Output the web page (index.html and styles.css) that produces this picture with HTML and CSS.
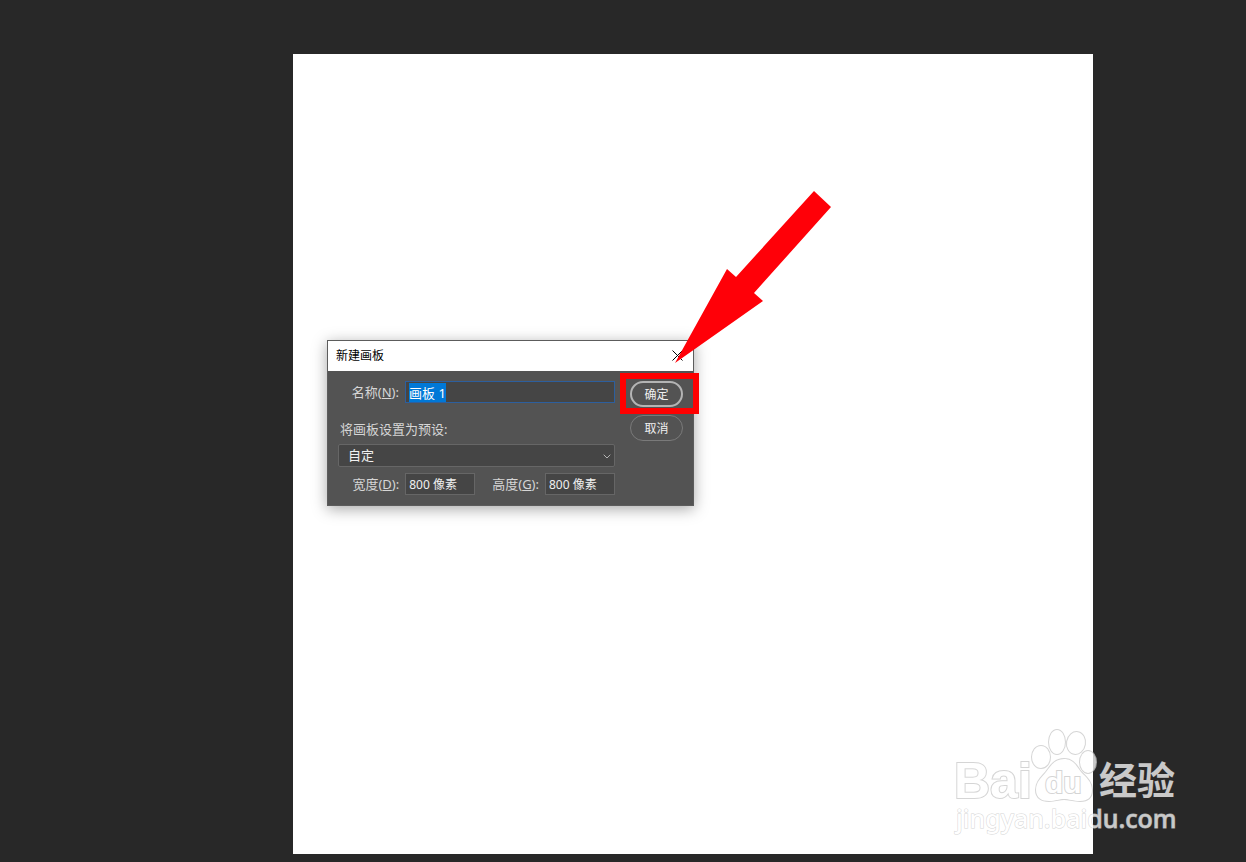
FILE: index.html
```html
<!DOCTYPE html>
<html lang="zh-CN">
<head>
    <meta charset="UTF-8">
    <meta name="viewport" content="width=device-width, initial-scale=1.0">
    <title>新建画板</title>
    <link rel="stylesheet" href="styles.css">
</head>
<body>
    <main class="workspace">
        <div class="canvas">
            <form class="dialog" role="dialog" aria-labelledby="dialog-title">
                <div class="dialog-header">
                    <h1 class="dialog-title" id="dialog-title">新建画板</h1>
                    <button class="close" type="button" aria-label="关闭">
                        <svg width="11" height="11" viewBox="0 0 11 11"><path d="M.5 .5l10 10M10.5 .5l-10 10" stroke="#000" fill="none"/></svg>
                    </button>
                </div>
                <div class="dialog-body">
                    <div class="fields">
                        <div class="row">
                            <label class="label" for="name">名称(<u>N</u>):</label>
                            <input class="field name" id="name" type="text" value="画板 1">
                        </div>
                        <label class="preset-label" for="preset">将画板设置为预设:</label>
                        <div class="select-wrap">
                            <select class="field preset" id="preset">
                                <option>自定</option>
                            </select>
                            <svg class="chevron" width="8" height="5" viewBox="0 0 8 5"><path d="M.7 .7L4 4L7.300 .7" stroke="#b4b4b4" fill="none"/></svg>
                        </div>
                        <div class="row">
                            <label class="label" for="width">宽度(<u>D</u>):</label>
                            <input class="field size" id="width" type="text" value="800 像素">
                            <label class="label label-height" for="height">高度(<u>G</u>):</label>
                            <input class="field size" id="height" type="text" value="800 像素">
                        </div>
                    </div>
                    <div class="actions">
                        <button class="btn btn-primary" type="button">确定</button>
                        <button class="btn" type="button">取消</button>
                    </div>
                </div>
                <div class="highlight"></div>
                <svg class="arrow" width="156" height="173" viewBox="0 0 156 173"><path d="M0 173L52 79L61 87L139 1L156 17L79 103L88 111Z" fill="#ff0008"/></svg>
            </form>
        </div>
    </main>

    <!-- Watermark -->
    <svg class="watermark" width="230" height="112" viewBox="0 0 230 112">
        <g class="mark">
            <text class="mark-bai" x="4" y="72">Bai</text>
            <ellipse cx="91" cy="31" rx="9" ry="11"/>
            <ellipse cx="107" cy="16" rx="8" ry="12"/>
            <ellipse cx="126" cy="17" rx="9" ry="11" transform="rotate(10 126 17)"/>
            <ellipse cx="138" cy="36" rx="8" ry="11"/>
            <path d="M114 33C104 33 100 41 96 46C91 52 86 56 86 64C86 72 92 75 99 75C106 75 109 73 114 73C119 73 123 75 130 75C138 75 142 71 142 64C142 56 136 51 131 46C127 41 124 33 114 33Z"/>
            <text class="mark-du" x="95" y="67">du</text>
            <text class="mark-cn" x="149" y="68">经验</text>
            <text class="mark-url" x="6" y="102">jingyan.baidu.com</text>
        </g>
    </svg>

    <script src="script.js"></script>
</body>
</html>
```

FILE: styles.css
```css
* {
    box-sizing: border-box;
    margin: 0;
    padding: 0;
}

body {
    font-family: "Noto Sans", "Noto Sans CJK SC", sans-serif;
    font-size: 12px;
    background-color: #282828;
    color: #d6d6d6;
    min-height: 100vh;
    position: relative;
}

button,
input,
select {
    font: inherit;
}

.workspace {
    padding: 54px 153px 8px 293px;
}

/* Square document, scales with the window */
.canvas {
    position: relative;
    aspect-ratio: 1;
    background-color: #ffffff;
}

/* Floating window */
.dialog {
    position: absolute;
    left: 34px;
    top: 286px;
    width: 367px;
    border: 1px solid #5c5c5c;
    background-color: #535353;
    box-shadow: 0 3px 14px rgba(0, 0, 0, 0.35);
}

.dialog-header {
    display: flex;
    align-items: center;
    justify-content: space-between;
    height: 30px;
    padding: 0 10px 2px 8px;
    background-color: #ffffff;
    color: #000000;
}

.dialog-title {
    font-size: 12px;
    font-weight: normal;
}

.close {
    display: flex;
    border: none;
    background: none;
}

.dialog-body {
    display: flex;
    justify-content: space-between;
    padding: 10px;
}

.fields {
    display: flex;
    flex-direction: column;
    width: 277px;
}

.row {
    display: flex;
    align-items: center;
    justify-content: flex-end;
    gap: 6px;
}

.label {
    font-size: 13px;
    line-height: 18px;
}

.field {
    height: 22px;
    padding: 0 3px;
    border: 1px solid #666666;
    background-color: #454545;
    color: #f0f0f0;
    outline: none;
}

.name {
    width: 210px;
    border-color: #2d5f9e;
    font-size: 13px;
}

.name::selection {
    background-color: #0078d7;
    color: #ffffff;
}

.preset-label {
    margin: 17px 0 6px 2px;
    line-height: 18px;
    font-size: 13px;
}

.select-wrap {
    position: relative;
    margin-bottom: 6px;
}

.preset {
    display: block;
    width: 100%;
    height: 23px;
    padding: 0 9px 2px;
    appearance: none;
    border-radius: 2px;
    font-size: 13px;
}

.chevron {
    position: absolute;
    right: 4px;
    top: 10px;
    pointer-events: none;
}

.size {
    width: 70px;
}

.label-height {
    margin-left: 11px;
}

.actions {
    display: flex;
    flex-direction: column;
    gap: 8px;
}

.btn {
    width: 53px;
    height: 26px;
    border: 1px solid #7a7a7a;
    border-radius: 13px;
    background-color: #535353;
    color: #f0f0f0;
}

.btn-primary {
    border: 2px solid #b4b4b4;
}

/* Callouts drawn over the dialog */
.highlight {
    position: absolute;
    left: 292px;
    top: 32px;
    width: 79px;
    height: 41px;
    border: 6px solid #ff0000;
    pointer-events: none;
}

.arrow {
    position: absolute;
    left: 347px;
    top: -151px;
    pointer-events: none;
}

.watermark {
    position: absolute;
    right: 66px;
    bottom: 24px;
}

.mark {
    fill: #ffffff;
    stroke: #c8c8c8;
    stroke-width: 2px;
    paint-order: stroke;
    opacity: 0.75;
}

.mark-bai {
    font: bold 50px "Liberation Sans", Arial, sans-serif;
}

.mark-du {
    font: bold 30px "Liberation Sans", Arial, sans-serif;
}

.mark-cn {
    font: bold 38px "Noto Sans CJK SC", sans-serif;
    stroke: none;
}

.mark-url {
    font: 500 25px "Noto Sans", sans-serif;
    stroke-width: 1px;
}
```

FILE: script.js
```js
// The name is selected when the dialog opens
var nameInput = document.getElementById('name');
nameInput.focus();
nameInput.select();
```
